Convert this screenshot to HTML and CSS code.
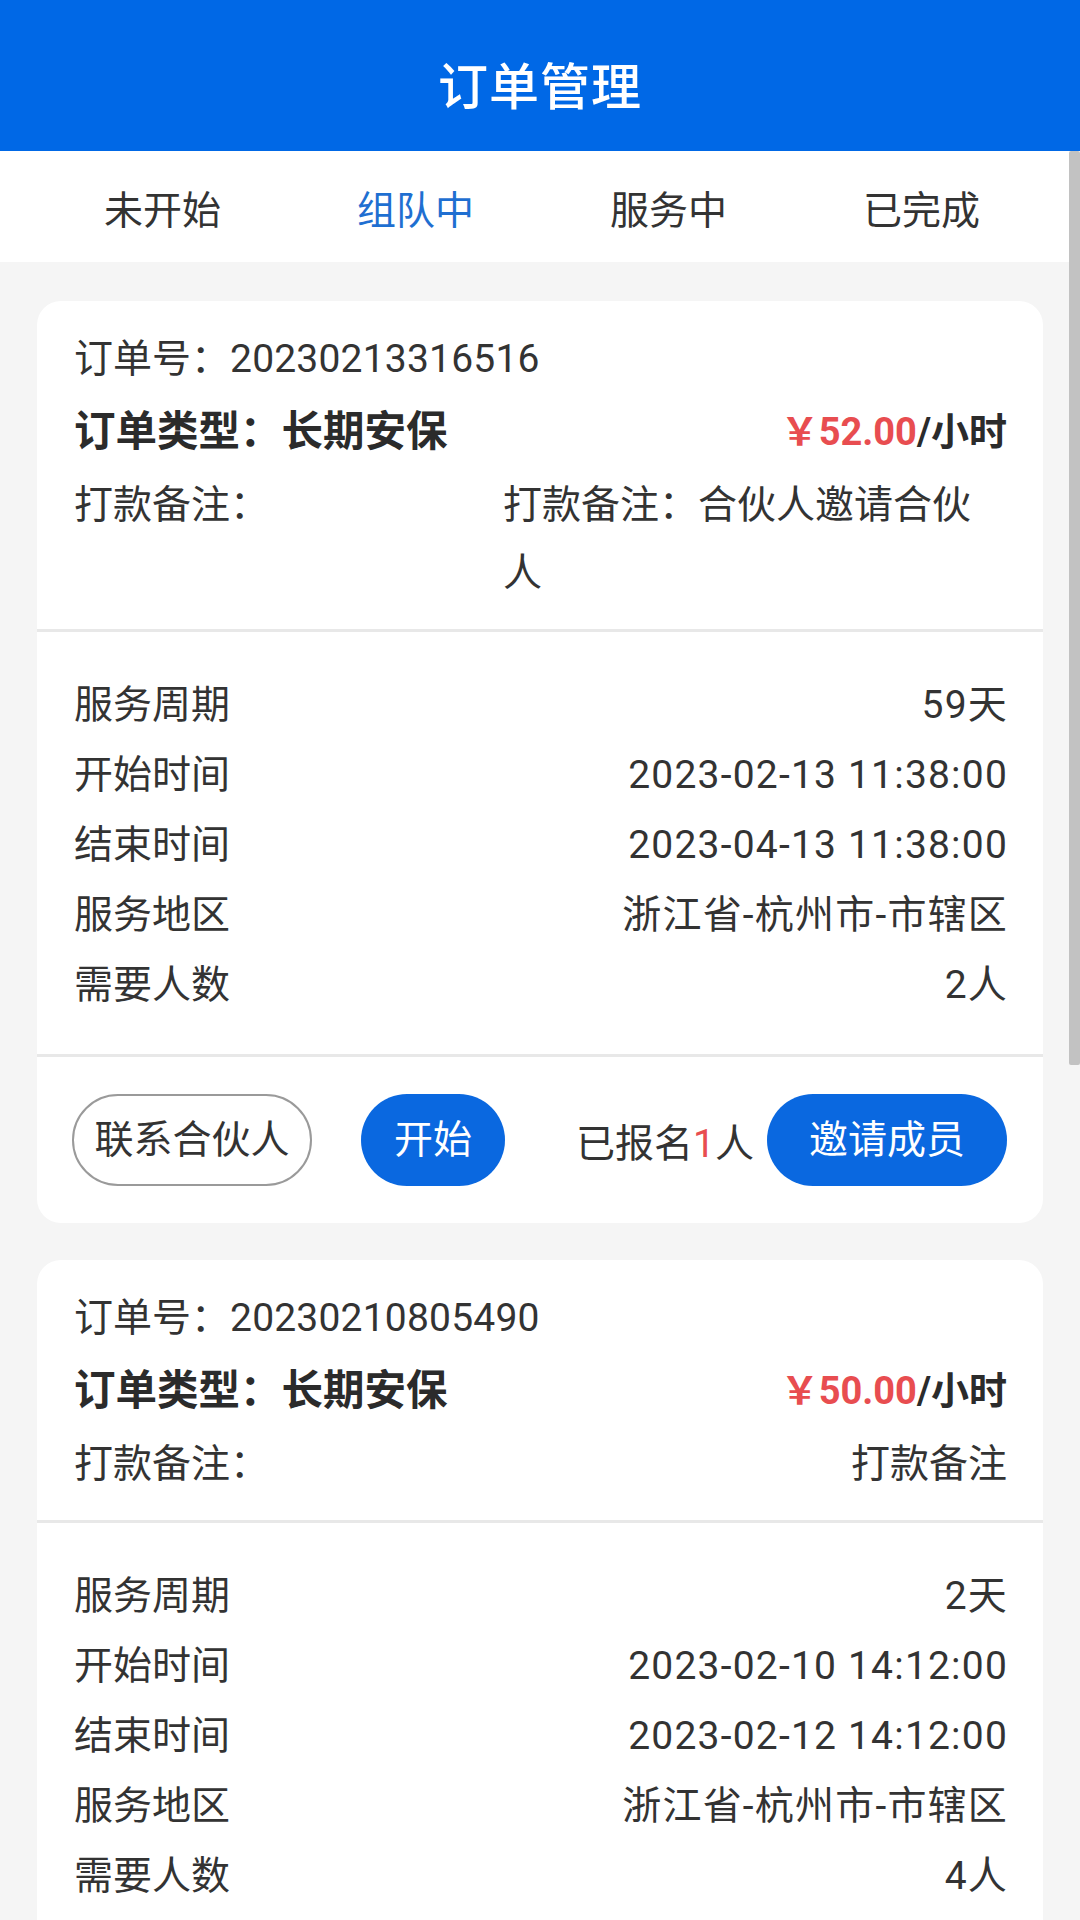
FILE: index.html
```html
<!DOCTYPE html>
<html lang="zh-CN">
<head>
<meta charset="utf-8">
<title>订单管理</title>
<link rel="stylesheet" href="styles.css">
</head>
<body>
<div class="app">
  <header class="topbar"><h1 class="title">订单管理</h1></header>
  <nav class="tabs">
    <div class="tab">未开始</div>
    <div class="tab active">组队中</div>
    <div class="tab">服务中</div>
    <div class="tab">已完成</div>
  </nav>
  <main class="list">
    <section class="card">
      <div class="card-head">
        <div class="row">订单号：<span class="num">20230213316516</span></div>
        <div class="row row-type">
          <span class="type">订单类型：长期安保</span>
          <span class="price"><span class="amount">￥52.00</span>/小时</span>
        </div>
        <div class="row row-remark">
          <span class="label">打款备注：</span>
          <span class="remark">打款备注：合伙人邀请合伙人</span>
        </div>
      </div>
      <div class="card-body">
        <div class="detail"><span>服务周期</span><span class="val">59天</span></div>
        <div class="detail"><span>开始时间</span><span class="val">2023-02-13 11:38:00</span></div>
        <div class="detail"><span>结束时间</span><span class="val">2023-04-13 11:38:00</span></div>
        <div class="detail"><span>服务地区</span><span class="val">浙江省-杭州市-市辖区</span></div>
        <div class="detail"><span>需要人数</span><span class="val">2人</span></div>
      </div>
      <div class="card-foot">
        <div class="btn-group">
          <button class="btn btn-outline">联系合伙人</button>
          <button class="btn btn-primary btn-start">开始</button>
        </div>
        <div class="enroll">
          <span class="enroll-text">已报名<em class="count">1</em>人</span>
          <button class="btn btn-primary btn-invite">邀请成员</button>
        </div>
      </div>
    </section>
    <section class="card">
      <div class="card-head">
        <div class="row">订单号：<span class="num">20230210805490</span></div>
        <div class="row row-type">
          <span class="type">订单类型：长期安保</span>
          <span class="price"><span class="amount">￥50.00</span>/小时</span>
        </div>
        <div class="row row-remark">
          <span class="label">打款备注：</span>
          <span class="remark">打款备注</span>
        </div>
      </div>
      <div class="card-body">
        <div class="detail"><span>服务周期</span><span class="val">2天</span></div>
        <div class="detail"><span>开始时间</span><span class="val">2023-02-10 14:12:00</span></div>
        <div class="detail"><span>结束时间</span><span class="val">2023-02-12 14:12:00</span></div>
        <div class="detail"><span>服务地区</span><span class="val">浙江省-杭州市-市辖区</span></div>
        <div class="detail"><span>需要人数</span><span class="val">4人</span></div>
      </div>
    </section>
  </main>
  <div class="scrollbar"></div>
</div>
</body>
</html>
```
FILE: styles.css
```css
* { box-sizing: border-box; }
html, body {
  margin: 0;
  padding: 0;
}
body {
  width: 1080px;
  height: 1920px;
  overflow: hidden;
  background: #f5f5f5;
  font-family: Roboto, "Noto Sans CJK SC", sans-serif;
  color: #333333;
  font-size: 39px;
}
.app {
  position: relative;
  width: 1080px;
  height: 1920px;
  overflow: hidden;
}
.topbar {
  height: 151px;
  background: #0068e6;
  display: flex;
  align-items: center;
  justify-content: center;
  padding-top: 14px;
}
.title {
  margin: 0;
  color: #ffffff;
  font-size: 50px;
  font-weight: 500;
  letter-spacing: 1px;
}
.tabs {
  height: 111px;
  background: #ffffff;
  display: grid;
  grid-template-columns: repeat(4, 1fr);
  align-items: center;
  padding: 0 32px 0 36px;
}
.tab {
  text-align: center;
  font-size: 39px;
  color: #333333;
}
.tab.active { color: #1f6fd1; }
.list {
  padding: 39px 37px 0 37px;
  display: flex;
  flex-direction: column;
  gap: 37px;
}
.card {
  background: #ffffff;
  border-radius: 24px;
  overflow: hidden;
}
.card-head {
  padding: 24px 36px 22px 37px;
  display: flex;
  flex-direction: column;
  gap: 5px;
  border-bottom: 3px solid #e8e8e8;
}
.row {
  line-height: 68px;
  display: flex;
  align-items: flex-start;
}
.num { letter-spacing: 0.2px; }
.row-type {
  justify-content: space-between;
  align-items: center;
}
.type {
  font-size: 41.5px;
  font-weight: 700;
  color: #2b2b2b;
}
.price {
  font-size: 38px;
  font-weight: 700;
  color: #2b2b2b;
}
.amount { color: #e84d50; }
.label { flex: none; }
.remark {
  margin-left: auto;
  max-width: 504px;
  text-align: left;
  line-height: 68px;
}
.card-body {
  padding: 38px 36px 34px 37px;
  border-bottom: 3px solid #e8e8e8;
}
.card:last-child .card-body { border-bottom: none; }
.detail {
  display: flex;
  justify-content: space-between;
  line-height: 70px;
}
.val { letter-spacing: 1.2px; margin-right: -1px; }
.card-foot {
  padding: 37px 36px 37px 35px;
  display: flex;
  justify-content: space-between;
  align-items: center;
}
.btn-group {
  display: flex;
  gap: 49px;
}
.enroll {
  display: flex;
  align-items: center;
  gap: 13px;
}
.enroll-text { color: #333333; }
.count {
  font-style: normal;
  color: #e84d50;
}
.btn {
  height: 92px;
  border-radius: 46px;
  font-family: inherit;
  font-size: 39px;
  line-height: 1;
  padding: 0;
  display: flex;
  align-items: center;
  justify-content: center;
  cursor: pointer;
}
.btn-outline {
  width: 240px;
  background: #ffffff;
  border: 2px solid #9a9a9a;
  color: #333333;
}
.btn-primary {
  background: #0a68e0;
  border: none;
  color: #ffffff;
}
.btn-start { width: 144px; }
.btn-invite { width: 240px; }
.scrollbar {
  position: absolute;
  right: 0;
  top: 151px;
  width: 11px;
  height: 914px;
  background: #c2c2c2;
  border-radius: 2px;
}
```
